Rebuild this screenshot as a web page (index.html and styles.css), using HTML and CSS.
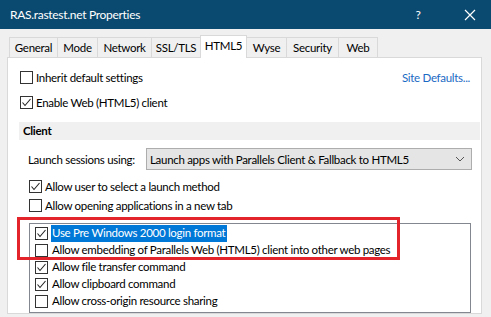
FILE: index.html
```html
<!DOCTYPE html>
<html lang="en">
  <head>
    <meta charset="UTF-8">
    <title>RAS.rastest.net Properties</title>
    <link rel="stylesheet" href="styles.css">
  </head>
  <body>
    <div class="dialog">
      <div class="title-bar">
        <span class="title-bar__text">RAS.rastest.net Properties</span>
        <span class="title-bar__help">?</span>
        <span class="title-bar__close">
          <svg width="12" height="12" viewBox="0 0 12 12"><path d="M1 1 L11 11 M11 1 L1 11" stroke="#fff" stroke-width="1.2" fill="none"/></svg>
        </span>
      </div>
      <div class="dialog-body">
        <div class="tabs">
          <div class="tab tab--general">General</div>
          <div class="tab tab--mode">Mode</div>
          <div class="tab tab--network">Network</div>
          <div class="tab tab--ssl">SSL/TLS</div>
          <div class="tab tab--html5 tab--active">HTML5</div>
          <div class="tab tab--wyse">Wyse</div>
          <div class="tab tab--security">Security</div>
          <div class="tab tab--web">Web</div>
        </div>
        <div class="panel">
          <div class="row row--first">
            <label class="check"><span class="check__box"></span>Inherit default settings</label>
            <span class="site-link">Site Defaults...</span>
          </div>
          <div class="row row--second">
            <label class="check"><span class="check__box check__box--on"><svg width="11" height="11" viewBox="0 0 11 11"><path d="M1.5 5.5 L4 8.5 L9.5 2" stroke="#222" stroke-width="1.1" fill="none"/></svg></span>Enable Web (HTML5) client</label>
          </div>
          <div class="section-head">Client</div>
          <div class="select-row">
            <span class="select-row__label">Launch sessions using:</span>
            <div class="select">
              <span>Launch apps with Parallels Client &amp; Fallback to HTML5</span>
              <svg width="10" height="6" viewBox="0 0 10 6"><path d="M1 1 L5 5 L9 1" stroke="#555" stroke-width="1" fill="none"/></svg>
            </div>
          </div>
          <div class="row row--sub row--launch">
            <label class="check"><span class="check__box check__box--on"><svg width="11" height="11" viewBox="0 0 11 11"><path d="M1.5 5.5 L4 8.5 L9.5 2" stroke="#222" stroke-width="1.1" fill="none"/></svg></span>Allow user to select a launch method</label>
          </div>
          <div class="row row--sub row--tab">
            <label class="check"><span class="check__box"></span>Allow opening applications in a new tab</label>
          </div>
          <div class="list-box">
            <div class="list-item">
              <span class="check__box check__box--on"><svg width="11" height="11" viewBox="0 0 11 11"><path d="M1.5 5.5 L4 8.5 L9.5 2" stroke="#222" stroke-width="1.1" fill="none"/></svg></span>
              <span class="list-item__text list-item__text--selected">Use Pre Windows 2000 login format</span>
            </div>
            <div class="list-item">
              <span class="check__box"></span>
              <span class="list-item__text">Allow embedding of Parallels Web (HTML5) client into other web pages</span>
            </div>
            <div class="list-item">
              <span class="check__box check__box--on"><svg width="11" height="11" viewBox="0 0 11 11"><path d="M1.5 5.5 L4 8.5 L9.5 2" stroke="#222" stroke-width="1.1" fill="none"/></svg></span>
              <span class="list-item__text">Allow file transfer command</span>
            </div>
            <div class="list-item">
              <span class="check__box check__box--on"><svg width="11" height="11" viewBox="0 0 11 11"><path d="M1.5 5.5 L4 8.5 L9.5 2" stroke="#222" stroke-width="1.1" fill="none"/></svg></span>
              <span class="list-item__text">Allow clipboard command</span>
            </div>
            <div class="list-item">
              <span class="check__box"></span>
              <span class="list-item__text">Allow cross-origin resource sharing</span>
            </div>
          </div>
        </div>
      </div>
      <div class="highlight-box"></div>
    </div>
  </body>
</html>
```

FILE: styles.css
```css
* {
  margin: 0;
  padding: 0;
  box-sizing: border-box;
}
body {
  width: 491px;
  height: 317px;
  overflow: hidden;
  background-color: #f0f0f0;
  font-family: "Segoe UI", Lato, "Noto Sans", sans-serif;
  font-size: 11.5px;
  letter-spacing: -0.3px;
  color: #000;
  white-space: nowrap;
}
.dialog {
  position: relative;
  width: 491px;
  height: 317px;
}
.title-bar {
  height: 29px;
  background-color: #0b4a70;
  color: #fff;
  display: flex;
  align-items: center;
  padding-left: 10px;
  font-size: 12px;
}
.title-bar__text {
  flex: 1;
}
.title-bar__help {
  width: 14px;
  margin-right: 39px;
  text-align: center;
}
.title-bar__close {
  width: 12px;
  height: 12px;
  margin-right: 15px;
  display: flex;
}
.dialog-body {
  padding: 8px 9px 0 7px;
}
.tabs {
  display: flex;
  height: 20px;
  padding-left: 2px;
  align-items: flex-end;
}
.tab {
  height: 20px;
  line-height: 19px;
  text-align: center;
  background-color: #f0f0f0;
  border: 1px solid #d9d9d9;
  border-bottom: none;
  margin-right: -1px;
}
.tab--general { width: 49px; }
.tab--mode { width: 41px; }
.tab--network { width: 55px; }
.tab--ssl { width: 50px; }
.tab--html5 { width: 47px; }
.tab--wyse { width: 41px; }
.tab--security { width: 53px; }
.tab--web { width: 40px; }
.tab--active {
  height: 23px;
  line-height: 19px;
  background-color: #fff;
  position: relative;
  z-index: 1;
  margin-bottom: -1px;
}
.panel {
  height: 257px;
  background-color: #fff;
  border: 1px solid #d9d9d9;
  padding: 10px 1px 0 12px;
}
.row {
  height: 18px;
  display: flex;
  align-items: center;
}
.row--second {
  margin-top: 7px;
}
.row--sub {
  padding-left: 9px;
}
.row--launch {
  margin-top: 7px;
}
.row--tab {
  margin-top: 1px;
}
.check {
  display: flex;
  align-items: center;
  flex: 1;
}
.check__box {
  width: 13px;
  height: 13px;
  border: 1px solid #333;
  background-color: #fff;
  margin-right: 3px;
  display: flex;
  align-items: center;
  justify-content: center;
  flex-shrink: 0;
}
.site-link {
  color: #1a6ac4;
  margin-right: 10px;
}
.section-head {
  margin-top: 11px;
  margin-left: -1px;
  height: 18px;
  line-height: 18px;
  background-color: #f0f0f0;
  padding-left: 4px;
  font-weight: bold;
}
.select-row {
  margin-top: 8px;
  display: flex;
  align-items: center;
  padding-left: 8px;
  height: 22px;
}
.select-row__label {
  width: 118px;
}
.select {
  width: 326px;
  height: 22px;
  background-color: #e5e5e5;
  border: 1px solid #adadad;
  display: flex;
  align-items: center;
  justify-content: space-between;
  padding: 0 6px 0 3px;
}
.list-box {
  margin: 9px 0 0 9px;
  width: 442px;
  height: 90px;
  border: 1px solid #828790;
  padding: 1px 0 0 5px;
}
.list-item {
  height: 17px;
  display: flex;
  align-items: center;
}
.list-item__text {
  padding: 0 2px 1px 1px;
  line-height: 16px;
}
.list-item__text--selected {
  background-color: #0078d7;
  color: #fff;
}
.highlight-box {
  position: absolute;
  left: 17px;
  top: 217px;
  width: 383px;
  height: 43px;
  border: 3px solid #e3242b;
}
```
